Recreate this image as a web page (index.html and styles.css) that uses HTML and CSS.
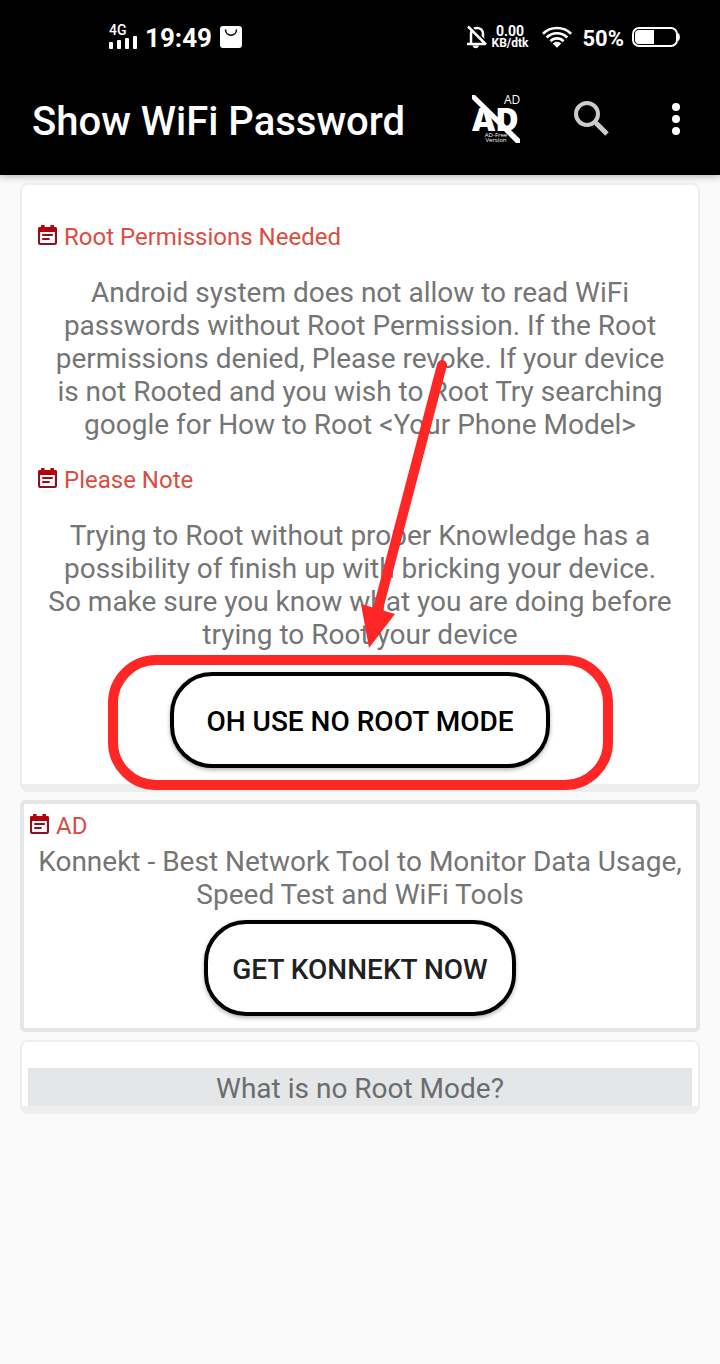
FILE: index.html
```html
<!DOCTYPE html>
<html lang="en">

<head>
  <meta charset="UTF-8">
  <meta name="viewport" content="width=device-width, initial-scale=1.0">
  <title>Show WiFi Password</title>
  <link rel="stylesheet" href="styles.css">
</head>

<body>
  <header class="header">
    <div class="status">
      <div class="status__group">
        <div class="signal">
          <span class="signal__type">4G</span>
          <svg width="28" height="14" viewBox="0 0 28 14" fill="#fff">
            <rect x="0" y="7" width="4" height="7" rx="1" />
            <rect x="8" y="5" width="4" height="9" rx="1" />
            <rect x="16" y="3" width="4" height="11" rx="1" />
            <rect x="24" y="1" width="4" height="13" rx="1" />
          </svg>
        </div>
        <span class="status__time">19:49</span>
        <svg width="22" height="22" viewBox="0 0 22 22">
          <rect width="22" height="22" rx="3" fill="#fff" />
          <path d="M5.500 3.500c0 7.500 11 7.500 11 0" fill="none" stroke="#000" stroke-width="1.500" />
        </svg>
      </div>
      <div class="status__group status__group--right">
        <svg width="20" height="24" viewBox="0 0 20 24">
          <path d="M4 18V9c0-8 12-8 12 0v9M0 19h18" fill="none" stroke="#fff" stroke-width="2.500" />
          <path d="M5.500 20.500h6.500c-.500 3.500-6 3.500-6.500 0z" fill="#fff" />
          <path d="M2.500.500L20 18" stroke="#000" stroke-width="2" />
          <path d="M1 1.500L19 19.500" stroke="#fff" stroke-width="2.500" />
        </svg>
        <div class="speed">
          <span class="speed__value">0.00</span>
          <span>KB/dtk</span>
        </div>
        <svg class="status__wifi" width="30" height="24" viewBox="0 0 32 24" fill="none" stroke="#fff" stroke-width="2.800">
          <path d="M1 8.500C9 .300 23 .300 31 8.500" />
          <path d="M5 12.500c6-6 16-6 22 0" />
          <path d="M9 16.500c4-4 10-4 14 0" />
          <path d="M11.500 19c2.500-2.500 6.500-2.500 9 0L16 23.500z" fill="#fff" stroke="none" />
        </svg>
        <span class="status__percent">50%</span>
        <svg width="48" height="22" viewBox="0 0 48 22">
          <rect x="1" y="2" width="44" height="18" rx="6" fill="none" stroke="#fff" stroke-width="2" />
          <path d="M7 4h15v14H7c-2.500 0-4-1.500-4-4V8c0-2.500 1.500-4 4-4z" fill="#fff" />
          <path d="M46 7c2.500 1 2.500 7 0 8z" fill="#fff" />
        </svg>
      </div>
    </div>

    <div class="toolbar">
      <h1 class="toolbar__title">Show WiFi Password</h1>
      <button class="toolbar__button toolbar__button--ad" type="button" aria-label="AD-Free Version">
        <svg width="50" height="50" viewBox="0 -1 50 50" fill="#fff">
          <text class="ad-small" x="32" y="9">AD</text>
          <text class="ad-big" x="0" y="36">AD</text>
          <path d="M0 0h3l45 44v4h-4L0 4z" />
          <text class="ad-tiny" x="24" y="42" text-anchor="middle">AD-Free</text>
          <text class="ad-tiny" x="24" y="47" text-anchor="middle">Version</text>
        </svg>
      </button>
      <button class="toolbar__button toolbar__button--search" type="button" aria-label="Search">
        <svg width="36" height="36" viewBox="0 0 36 36" fill="none" stroke="#ccc">
          <circle cx="13" cy="13" r="11" stroke-width="4" />
          <path d="M20.500 20.500l2.500 2.500" stroke-width="4" />
          <path d="M22.500 22.500L33 33" stroke-width="5" />
        </svg>
      </button>
      <button class="toolbar__button" type="button" aria-label="More options">
        <svg width="8" height="32" viewBox="0 0 8 32" fill="#fff">
          <circle cx="4" cy="4" r="4" />
          <circle cx="4" cy="16" r="4" />
          <circle cx="4" cy="28" r="4" />
        </svg>
      </button>
    </div>
  </header>

  <svg class="symbols" width="0" height="0">
    <symbol id="note" viewBox="0 0 18 20" preserveAspectRatio="none">
      <path d="M2 2h1V0h3v2h6V0h3v2h1q2 0 2 2v14q0 2-2 2H2q-2 0-2-2V4q0-2 2-2zM2 7v11h14V7z" fill="#8e1020" />
      <path d="M2 2h1V0h3v2h6V0h3v2h1q2 0 2 2v3H0V4q0-2 2-2z" fill="#b3000c" />
      <path d="M4 10h10M4 14h7" stroke="#8e1020" stroke-width="2" />
    </symbol>
  </svg>

  <main class="main">
    <section class="card">
      <h2 class="card__title"><svg class="card__icon"><use href="#note" /></svg>Root Permissions Needed</h2>
      <p class="card__text">Android system does not allow to read WiFi passwords without Root Permission. If the Root permissions denied, Please revoke. If your device is not Rooted and you wish to Root Try searching google for How to Root &lt;Your Phone Model&gt;</p>
      <h2 class="card__title"><svg class="card__icon"><use href="#note" /></svg>Please Note</h2>
      <p class="card__text">Trying to Root without proper Knowledge has a possibility of finish up with bricking your device. So make sure you know what you are doing before trying to Root your device</p>
      <button class="button button--wide" type="button">OH USE NO ROOT MODE</button>

      <!-- red arrow and frame around the button -->
      <svg class="pointer" width="506" height="432" viewBox="0 0 506 432">
        <rect x="6" y="300" width="495" height="125" rx="43" fill="none" stroke="#ff2626" stroke-width="10" />
        <path d="M335 5L271 249" stroke="#ff2626" stroke-width="10" stroke-linecap="round" />
        <path d="M254 244l34 10-26 34z" fill="#ff2626" />
      </svg>
    </section>

    <section class="card card--ad">
      <h2 class="card__title"><svg class="card__icon"><use href="#note" /></svg>AD</h2>
      <p class="card__text">Konnekt - Best Network Tool to Monitor Data Usage, Speed Test and WiFi Tools</p>
      <button class="button button--ad" type="button">GET KONNEKT NOW</button>
    </section>

    <section class="card card--question">
      <p class="question">What is no Root Mode?</p>
    </section>
  </main>
</body>

</html>
```
FILE: styles.css
```css
* {
  box-sizing: border-box;
}

body {
  margin: 0;
  min-height: 100vh;
  font-family: Roboto, sans-serif;
  background-color: #fafafa;
}

h1,
h2,
p {
  margin: 0;
  font-weight: 400;
}

svg {
  display: block;
  flex-shrink: 0;
}

button {
  font-family: inherit;
  cursor: pointer;
}

.header {
  color: #fff;
  background-color: #000;
  box-shadow: 0 1px 8px rgba(0, 0, 0, 0.3);
}

.status {
  display: flex;
  align-items: center;
  justify-content: space-between;
  height: 74px;
  padding: 0 40px 0 109px;
}

.status__group {
  display: flex;
  align-items: center;
  gap: 8px;
}

.status__group--right {
  gap: 5px;
}

.status__time {
  padding-top: 2px;
  font-size: 26px;
  font-weight: 700;
}

.status__wifi {
  margin: 0 5px 0 9px;
}

.status__percent {
  padding-top: 2px;
  margin-right: 3px;
  font-size: 22px;
  font-weight: 700;
}

.signal__type {
  display: block;
  font-size: 14px;
  font-weight: 500;
  line-height: 10px;
}

.speed {
  display: flex;
  flex-direction: column;
  align-items: center;
  font-size: 12px;
  font-weight: 700;
  line-height: 12px;
}

.speed__value {
  font-size: 14px;
}

.toolbar {
  display: flex;
  align-items: center;
  height: 101px;
  padding: 0 40px 12px 32px;
}

.toolbar__title {
  flex: 1;
  padding-top: 6px;
  font-size: 40px;
  font-weight: 500;
  line-height: 48px;
}

.toolbar__button {
  padding: 0;
  border: none;
  background: none;
}

.toolbar__button--ad {
  margin-right: 52px;
}

.toolbar__button--ad svg {
  overflow: visible;
}

.toolbar__button--search {
  margin-right: 62px;
}

.ad-big {
  font-family: "Open Sans", sans-serif;
  font-size: 32px;
  font-weight: 800;
}

.ad-small {
  font-family: "Open Sans", sans-serif;
  font-size: 12px;
}

.ad-tiny {
  font-family: "Open Sans", sans-serif;
  font-size: 6px;
}

.symbols {
  position: absolute;
}

.main {
  display: flex;
  flex-direction: column;
  gap: 8px;
  padding: 8px 20px;
}

.card {
  position: relative;
  padding: 38px 16px 16px;
  text-align: center;
  background-color: #fff;
  border: 2px solid #eee;
  border-bottom-width: 8px;
  border-radius: 8px;
}

.card__title {
  display: flex;
  align-items: center;
  gap: 7px;
  margin-bottom: 25px;
  color: #dc4c41;
  font-size: 24px;
  line-height: 28px;
}

.card__icon {
  width: 19px;
  height: 20px;
  margin-bottom: 4px;
}

.card__text {
  padding: 0 8px;
  color: #757575;
  font-size: 28px;
  line-height: 33px;
}

.card__text + .card__title {
  margin-top: 25px;
}

.button {
  height: 96px;
  margin-top: 21px;
  padding: 2px 32px 0;
  color: #000;
  font-size: 28px;
  font-weight: 500;
  background-color: #fff;
  border: 4px solid #000;
  border-radius: 42px;
  box-shadow: 0 2px 4px rgba(0, 0, 0, 0.3);
}

.pointer {
  position: absolute;
  top: 175px;
  left: 50%;
  transform: translateX(-50%);
  pointer-events: none;
}

.card--ad {
  padding: 8px 6px 12px;
  border: 4px solid #e4e6e7;
  border-radius: 5px;
}

.card--ad .card__title {
  margin-bottom: 5px;
}

.button--ad {
  margin-top: 9px;
  padding: 2px 24px 0;
  color: #212121;
}

.card--question {
  padding: 26px 6px 0;
}

.question {
  padding: 4px 0 1px;
  color: #6b6c6d;
  font-size: 28px;
  line-height: 33px;
  background-color: #e4e6e8;
}
```
